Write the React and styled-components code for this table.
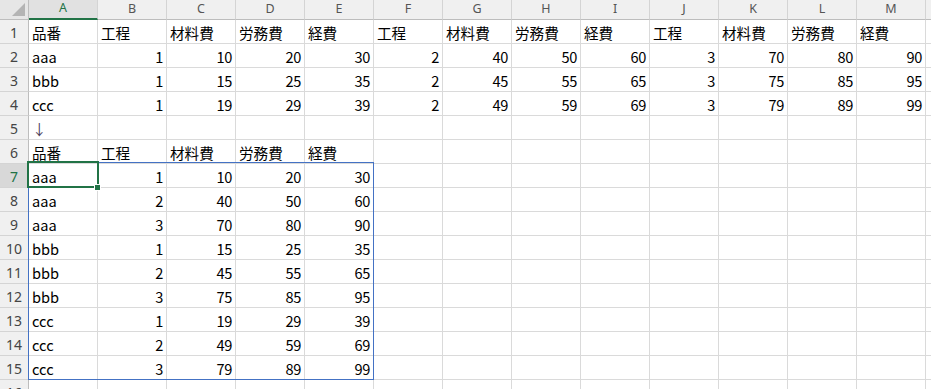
import React from "react";
import styled, { createGlobalStyle } from "styled-components";

const Global = createGlobalStyle`
  html, body { margin: 0; padding: 0; background: #ffffff; overflow: hidden; }
  body { width: 931px; height: 389px; }
`;

const COLS = ["A", "B", "C", "D", "E", "F", "G", "H", "I", "J", "K", "L", "M", "N"];
const H = ["品番", "工程", "材料費", "労務費", "経費"];

const rows = [
  ["品番", "工程", "材料費", "労務費", "経費", "工程", "材料費", "労務費", "経費", "工程", "材料費", "労務費", "経費"],
  ["aaa", 1, 10, 20, 30, 2, 40, 50, 60, 3, 70, 80, 90],
  ["bbb", 1, 15, 25, 35, 2, 45, 55, 65, 3, 75, 85, 95],
  ["ccc", 1, 19, 29, 39, 2, 49, 59, 69, 3, 79, 89, 99],
  ["↓"],
  H,
  ["aaa", 1, 10, 20, 30],
  ["aaa", 2, 40, 50, 60],
  ["aaa", 3, 70, 80, 90],
  ["bbb", 1, 15, 25, 35],
  ["bbb", 2, 45, 55, 65],
  ["bbb", 3, 75, 85, 95],
  ["ccc", 1, 19, 29, 39],
  ["ccc", 2, 49, 59, 69],
  ["ccc", 3, 79, 89, 99],
  [],
];

const Sheet = styled.div`
  position: relative;
  display: grid;
  grid-template-columns: 29px repeat(14, 69px);
  grid-auto-rows: 24px;
  grid-template-rows: 20px;
  width: 931px;
  height: 389px;
  overflow: hidden;
  font-family: "Noto Sans CJK JP", "Noto Sans", sans-serif;
`;

const Corner = styled.div`
  background: #e6e6e6;
  border-right: 1px solid #bdbdbd;
  border-bottom: 1px solid #bdbdbd;
  box-sizing: border-box;
  position: relative;
  &::after {
    content: "";
    position: absolute;
    right: 3px;
    bottom: 3px;
    width: 0;
    height: 0;
    border-left: 13px solid transparent;
    border-bottom: 13px solid #b4b4b4;
  }
`;

const ColHead = styled.div`
  box-sizing: border-box;
  background: ${(p) => (p.$active ? "#e1e1e1" : "#f0f0f0")};
  border-right: 1px solid #d4d4d4;
  border-bottom: ${(p) => (p.$active ? "2px solid #217346" : "1px solid #bdbdbd")};
  color: ${(p) => (p.$active ? "#217346" : "#555555")};
  font-family: "Noto Sans", "Liberation Sans", sans-serif;
  font-size: 12.5px;
  display: flex;
  align-items: center;
  justify-content: center;
  line-height: 1;
  padding-bottom: 1px;
  overflow: hidden;
`;

const RowHead = styled.div`
  box-sizing: border-box;
  background: ${(p) => (p.$active ? "#d8d8d8" : "#f0f0f0")};
  border-right: 1px solid #bdbdbd;
  border-bottom: 1px solid #d4d4d4;
  color: ${(p) => (p.$active ? "#217346" : "#444444")};
  font-family: "Noto Sans", "Liberation Sans", sans-serif;
  font-size: 14px;
  display: flex;
  align-items: center;
  justify-content: center;
  padding-top: 2px;
`;

const Cell = styled.div`
  box-sizing: border-box;
  border-right: 1px solid #dadada;
  border-bottom: 1px solid #dadada;
  color: ${(p) => (p.$arrow ? "#4b3d5c" : "#000000")};
  font-size: 14.6px;
  display: flex;
  align-items: center;
  justify-content: ${(p) => (p.$num ? "flex-end" : "flex-start")};
  padding: 1px 3px 0 3px;
  white-space: nowrap;
  overflow: visible;
  letter-spacing: ${(p) => (p.$num ? "-0.4px" : "0")};
`;

const RangeBorder = styled.div`
  position: absolute;
  left: 28px;
  top: 162px;
  width: 346px;
  height: 218px;
  box-sizing: border-box;
  border: 1px solid #4472c4;
  pointer-events: none;
`;

const Selection = styled.div`
  position: absolute;
  left: 27px;
  top: 161px;
  width: 72px;
  height: 27px;
  box-sizing: border-box;
  border: 2px solid #217346;
  pointer-events: none;
`;

const Handle = styled.div`
  position: absolute;
  left: 94px;
  top: 184px;
  width: 7px;
  height: 7px;
  box-sizing: border-box;
  background: #217346;
  border: 1px solid #ffffff;
  pointer-events: none;
`;

export default function App() {
  return (
    <>
      <Global />
      <Sheet>
        <Corner />
        {COLS.map((c, i) => (
          <ColHead key={c} $active={i === 0}>{i < 13 ? c : ""}</ColHead>
        ))}
        {rows.map((r, ri) => (
          <React.Fragment key={ri}>
            <RowHead $active={ri === 6}>{ri + 1}</RowHead>
            {COLS.map((c, ci) => {
              const v = r[ci];
              const num = typeof v === "number";
              return (
                <Cell key={c} $num={num} $arrow={v === "↓"}>
                  {v !== undefined ? v : ""}
                </Cell>
              );
            })}
          </React.Fragment>
        ))}
        <RangeBorder />
        <Selection />
        <Handle />
      </Sheet>
    </>
  );
}
